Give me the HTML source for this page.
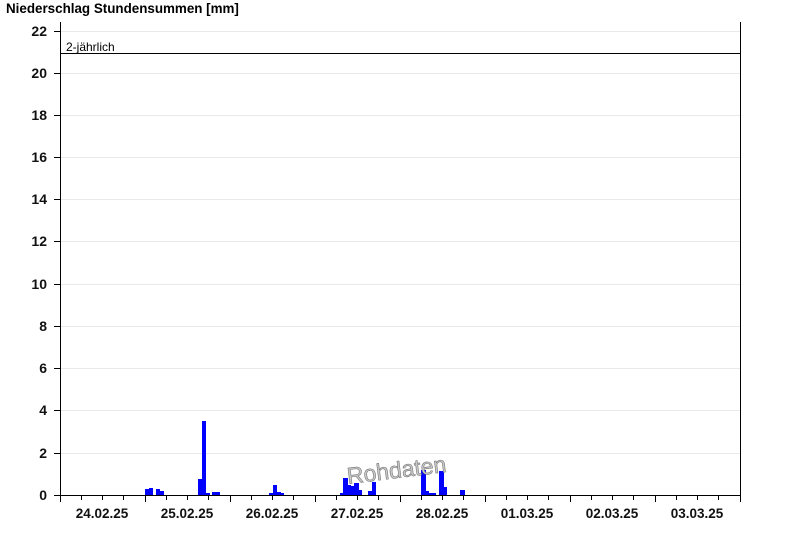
<!DOCTYPE html>
<html><head><meta charset="utf-8"><style>
body{margin:0;background:#fff;}
svg{display:block;font-family:"Liberation Sans",Arial,sans-serif;}
</style></head><body>
<svg width="800" height="550" xmlns="http://www.w3.org/2000/svg">
<text x="6" y="13" font-size="13.4" font-weight="bold" fill="#000">Niederschlag Stundensummen [mm]</text>
<g stroke="#e9e9e9" stroke-width="1">
<line x1="61" x2="740" y1="31.5" y2="31.5"/>
<line x1="61" x2="740" y1="73.5" y2="73.5"/>
<line x1="61" x2="740" y1="115.5" y2="115.5"/>
<line x1="61" x2="740" y1="157.5" y2="157.5"/>
<line x1="61" x2="740" y1="199.5" y2="199.5"/>
<line x1="61" x2="740" y1="241.5" y2="241.5"/>
<line x1="61" x2="740" y1="284.5" y2="284.5"/>
<line x1="61" x2="740" y1="326.5" y2="326.5"/>
<line x1="61" x2="740" y1="368.5" y2="368.5"/>
<line x1="61" x2="740" y1="410.5" y2="410.5"/>
<line x1="61" x2="740" y1="453.5" y2="453.5"/>
</g>
<g fill="#0000ff">
<rect x="145" y="489" width="4" height="6"/>
<rect x="149" y="488" width="4" height="7"/>
<rect x="156" y="489" width="4" height="6"/>
<rect x="160" y="491" width="4" height="4"/>
<rect x="198" y="479" width="4" height="16"/>
<rect x="202" y="421" width="4" height="74"/>
<rect x="206" y="493" width="4" height="2"/>
<rect x="212" y="492" width="8" height="3"/>
<rect x="269" y="493" width="4" height="2"/>
<rect x="273" y="485" width="4" height="10"/>
<rect x="277" y="492" width="4" height="3"/>
<rect x="281" y="493" width="3" height="2"/>
<rect x="340" y="493" width="3" height="2"/>
<rect x="343" y="478" width="5" height="17"/>
<rect x="348" y="485" width="3" height="10"/>
<rect x="351" y="486" width="3" height="9"/>
<rect x="354" y="483" width="5" height="12"/>
<rect x="359" y="490" width="3" height="5"/>
<rect x="368" y="491" width="4" height="4"/>
<rect x="372" y="482" width="4" height="13"/>
<rect x="421" y="470" width="5" height="25"/>
<rect x="426" y="491" width="3" height="4"/>
<rect x="429" y="493" width="3" height="2"/>
<rect x="432" y="493" width="4" height="2"/>
<rect x="439" y="471" width="5" height="24"/>
<rect x="444" y="487" width="3" height="8"/>
<rect x="460" y="490" width="5" height="5"/>
</g>
<line x1="61" x2="740" y1="53.5" y2="53.5" stroke="#000"/>
<text x="66" y="51" font-size="12" fill="#000">2-jährlich</text>
<g stroke="#000" stroke-width="1">
<line x1="60.5" x2="60.5" y1="22" y2="497"/>
<line x1="740.5" x2="740.5" y1="22" y2="495"/>
<line x1="60" x2="741" y1="495.5" y2="495.5"/>
</g>
<g stroke="#000">
<line x1="54" x2="61" y1="31.5" y2="31.5"/>
<line x1="54" x2="61" y1="73.5" y2="73.5"/>
<line x1="54" x2="61" y1="115.5" y2="115.5"/>
<line x1="54" x2="61" y1="157.5" y2="157.5"/>
<line x1="54" x2="61" y1="199.5" y2="199.5"/>
<line x1="54" x2="61" y1="241.5" y2="241.5"/>
<line x1="54" x2="61" y1="284.5" y2="284.5"/>
<line x1="54" x2="61" y1="326.5" y2="326.5"/>
<line x1="54" x2="61" y1="368.5" y2="368.5"/>
<line x1="54" x2="61" y1="410.5" y2="410.5"/>
<line x1="54" x2="61" y1="453.5" y2="453.5"/>
<line x1="54" x2="61" y1="495.5" y2="495.5"/>
</g>
<g font-size="14" font-weight="bold" text-anchor="end" fill="#111">
<text x="47" y="36">22</text><text x="47" y="78">20</text><text x="47" y="120">18</text>
<text x="47" y="162">16</text><text x="47" y="204">14</text><text x="47" y="246">12</text>
<text x="47" y="289">10</text><text x="47" y="331">8</text><text x="47" y="373">6</text>
<text x="47" y="415">4</text><text x="47" y="458">2</text><text x="47" y="500">0</text>
</g>
<g stroke="#000">
<path d="M60.5 495v7M145.5 495v7M230.5 495v7M315.5 495v7M400.5 495v7M485.5 495v7M570.5 495v7M655.5 495v7M740.5 495v7"/>
<path d="M81.5 495v5M102.5 495v5M123.5 495v5M166.5 495v5M187.5 495v5M208.5 495v5M251.5 495v5M272.5 495v5M293.5 495v5M336.5 495v5M357.5 495v5M378.5 495v5M421.5 495v5M442.5 495v5M463.5 495v5M506.5 495v5M527.5 495v5M548.5 495v5M591.5 495v5M612.5 495v5M633.5 495v5M676.5 495v5M697.5 495v5M718.5 495v5"/>
</g>
<g font-size="13.5" font-weight="bold" text-anchor="middle" fill="#111">
<text x="102" y="518">24.02.25</text><text x="187" y="518">25.02.25</text>
<text x="272" y="518">26.02.25</text><text x="357" y="518">27.02.25</text>
<text x="442" y="518">28.02.25</text><text x="527" y="518">01.03.25</text>
<text x="612" y="518">02.03.25</text><text x="697" y="518">03.03.25</text>
</g>
<text x="348" y="484" font-size="23" fill="#c8c8c8" stroke="#777" stroke-width="0.6" transform="rotate(-7 348 484)">Rohdaten</text>
</svg>
</body></html>
